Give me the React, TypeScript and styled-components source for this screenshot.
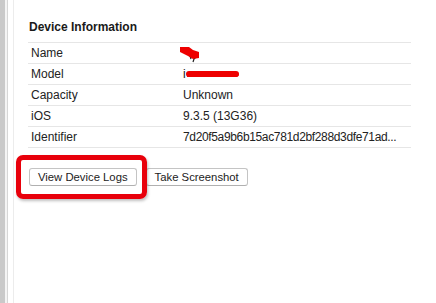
import React from "react";
import styled, { createGlobalStyle } from "styled-components";

const Global = createGlobalStyle`
  html, body { margin: 0; padding: 0; background: #fff; }
  body { font-family: "Liberation Sans", Arial, sans-serif; color: #1e1e1e; }
`;

const Frame = styled.div`
  display: flex;
  width: 436px;
  height: 303px;
  overflow: hidden;
  background: #fff;
`;

const Strip = styled.div<{ w: number; c: string }>`
  flex: 0 0 ${(p) => p.w}px;
  background: ${(p) => p.c};
`;

const Content = styled.div`
  flex: 1;
  padding: 19px 25px 0 14px;
  display: flex;
  flex-direction: column;
`;

const Heading = styled.div`
  font-size: 12px;
  font-weight: bold;
  line-height: 16px;
  padding-left: 1px;
  margin-bottom: 7px;
  color: #1a1a1a;
`;

const Table = styled.div`
  border-top: 1px solid #e6e6e6;
`;

const Row = styled.div`
  display: grid;
  grid-template-columns: 152px 1fr;
  height: 20px;
  align-items: center;
  border-bottom: 1px solid #e6e6e6;
  font-size: 12px;
  padding-left: 3px;
`;

const Label = styled.span`
  color: #222;
`;

const Value = styled.span<{ tight?: boolean }>`
  position: relative;
  color: #222;
  white-space: nowrap;
  line-height: 14px;
  height: 14px;
  letter-spacing: ${(p) => (p.tight ? "-0.35px" : "0")};
`;

const Scribble = styled.svg`
  position: absolute;
  top: -4px;
  left: -3px;
`;

const Buttons = styled.div`
  display: flex;
  gap: 9px;
  margin-top: 20px;
  padding-left: 1px;
`;

const Btn = styled.button`
  font-family: "Liberation Sans", Arial, sans-serif;
  font-size: 11.3px;
  height: 18px;
  padding: 0 8px;
  background: #fff;
  color: #222;
  border: 1px solid #c4c4c4;
  border-bottom-color: #b0b0b0;
  border-radius: 3px;
  line-height: 16px;
`;

const Highlight = styled.div`
  position: relative;
  display: flex;
`;

const RedBox = styled.div`
  position: absolute;
  left: -13px;
  top: -13px;
  right: -10px;
  bottom: -13px;
  border: 5px solid #e8000b;
  border-radius: 7px;
  box-shadow: 1px 2px 3px rgba(0, 0, 0, 0.25);
  pointer-events: none;
`;

export default function App() {
  return (
    <>
      <Global />
      <Frame>
        <Strip w={5} c="#c9c9c9" />
        <Strip w={2} c="#f4f4f4" />
        <Strip w={1} c="#d6d6d6" />
        <Strip w={5} c="#ffffff" />
        <Strip w={1} c="#ececec" />
        <Content>
          <Heading>Device Information</Heading>
          <Table>
            <Row>
              <Label>Name</Label>
              <Value>
                &nbsp;
                <Scribble width="24" height="22" viewBox="0 0 24 22">
                  <path d="M9 11 L11 17 M13 11 L15 17 M16 11 L13 20" stroke="#222" strokeWidth="1.2" fill="none" />
                  <path d="M0 5 L9 5 L13 8 L19 10 L19 16 L13 17 L8 14 L0 10 Z" fill="#ee0000" />
                </Scribble>
              </Value>
            </Row>
            <Row>
              <Label>Model</Label>
              <Value>
                i
                <Scribble width="70" height="22" viewBox="0 0 70 22">
                  <path d="M7 10 L58 10 L59 12 L57 14 L7 14 Z" fill="#ee0000" />
                  <rect x="6" y="8" width="53" height="6" rx="3" fill="#ee0000" />
                </Scribble>
              </Value>
            </Row>
            <Row>
              <Label>Capacity</Label>
              <Value>Unknown</Value>
            </Row>
            <Row>
              <Label>iOS</Label>
              <Value>9.3.5 (13G36)</Value>
            </Row>
            <Row>
              <Label>Identifier</Label>
              <Value tight>7d20f5a9b6b15ac781d2bf288d3dfe71ad...</Value>
            </Row>
          </Table>
          <Buttons>
            <Highlight>
              <Btn>View Device Logs</Btn>
              <RedBox />
            </Highlight>
            <Btn>Take Screenshot</Btn>
          </Buttons>
        </Content>
      </Frame>
    </>
  );
}
